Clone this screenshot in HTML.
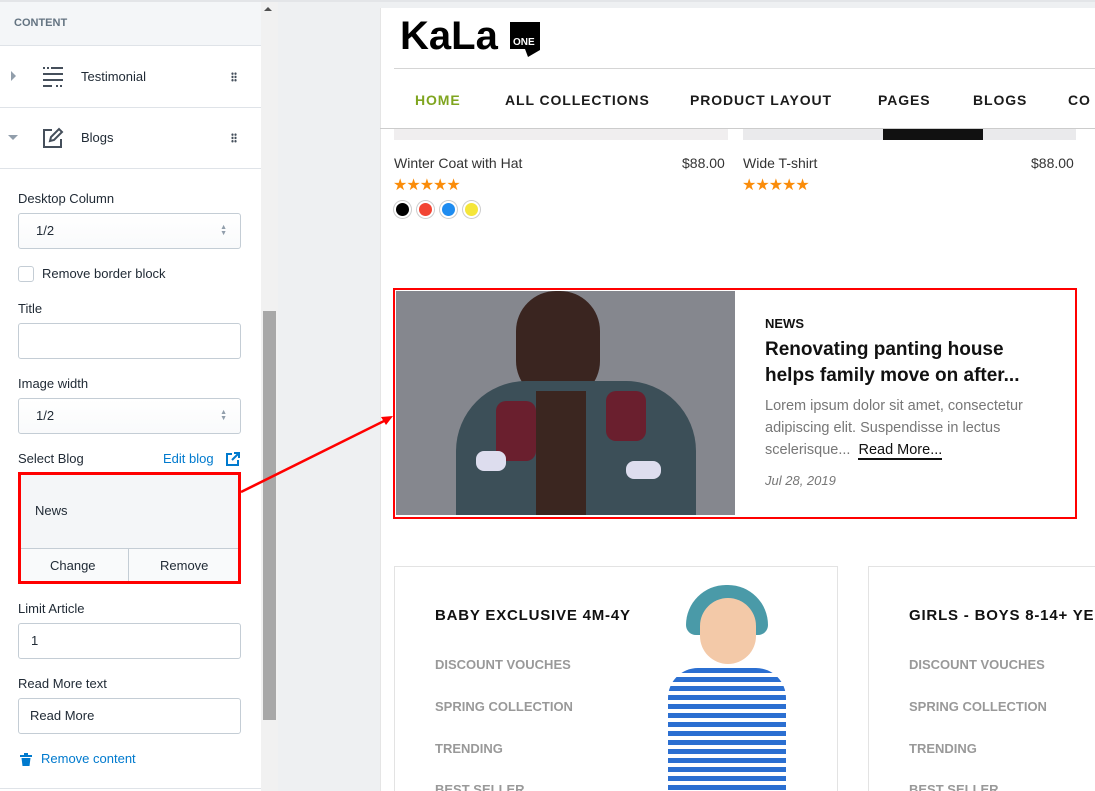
<!DOCTYPE html>
<html style="overflow:hidden;width:1095px;height:791px"><head><style>
*{box-sizing:border-box;margin:0;padding:0}
body{width:1095px;height:791px;overflow:hidden;background:#eef0f2;font-family:"Liberation Sans",sans-serif;position:relative}
.abs{position:absolute}
.side{left:0;top:0;width:261px;height:791px;background:#fff}
.lbl{position:absolute;left:18px;font-size:13px;color:#212b36}
.inp{position:absolute;left:18px;width:223px;height:36px;border:1px solid #c4cdd5;border-radius:3px;background:#fff;font-size:13px;color:#212b36;padding:0 0 0 12px;line-height:34px}
.sel{background:linear-gradient(#fff,#f9fafb);padding-left:17px}
.arr{position:absolute;right:13px;top:11px;font-size:7px;color:#919eab;line-height:6px}
.nav{font-size:14px;font-weight:bold;letter-spacing:0.9px;color:#1b1b1b;position:absolute;top:92px}
.lk{position:absolute;font-size:13px;font-weight:bold;color:#999}
.dots{position:absolute;left:231px;width:6px;height:10px;background:radial-gradient(circle,#454f5b 1.1px,transparent 1.3px) 0 0/3px 3.3px}
</style></head><body>
<div class="abs side">
 <div class="abs" style="left:0;top:0;width:261px;height:46px;background:#f4f6f8;border-bottom:1px solid #dfe3e8"></div>
 <div class="abs" style="left:14px;top:17px;font-size:11px;font-weight:bold;color:#637381">CONTENT</div>
 <div class="abs" style="left:11px;top:71px;width:0;height:0;border-left:5px solid #919eab;border-top:5px solid transparent;border-bottom:5px solid transparent"></div>
 <svg class="abs" style="left:42px;top:66px" width="22" height="22" viewBox="0 0 22 22" fill="#454f5b"><rect x="1" y="1" width="2" height="2"/><rect x="5" y="1" width="2" height="2"/><rect x="9" y="1" width="12" height="2"/><rect x="1" y="7" width="20" height="2"/><rect x="1" y="13" width="20" height="2"/><rect x="1" y="19" width="9" height="2"/><rect x="14" y="19" width="2" height="2"/><rect x="18" y="19" width="2" height="2"/></svg>
 <div class="abs" style="left:81px;top:69px;font-size:13px;color:#212b36">Testimonial</div>
 <div class="dots" style="top:72px"></div>
 <div class="abs" style="left:0;top:107px;width:261px;border-top:1px solid #dfe3e8"></div>
 <div class="abs" style="left:8px;top:135px;width:0;height:0;border-top:5px solid #919eab;border-left:5px solid transparent;border-right:5px solid transparent"></div>
 <svg class="abs" style="left:42px;top:127px" width="22" height="22" viewBox="0 0 22 22" fill="none" stroke="#454f5b" stroke-width="2"><path d="M10 3H2v17h17v-8"/><path d="M8 14l1-4 8-8 3 3-8 8z"/></svg>
 <div class="abs" style="left:81px;top:130px;font-size:13px;color:#212b36">Blogs</div>
 <div class="dots" style="top:133px"></div>
 <div class="abs" style="left:0;top:168px;width:261px;border-top:1px solid #dfe3e8"></div>

 <div class="lbl" style="top:191px">Desktop Column</div>
 <div class="inp sel" style="top:213px">1/2<div class="arr">▲<br>▼</div></div>
 <div class="abs" style="left:18px;top:266px;width:16px;height:16px;border:1px solid #c4cdd5;border-radius:3px"></div>
 <div class="lbl" style="top:266px;left:42px">Remove border block</div>
 <div class="lbl" style="top:301px">Title</div>
 <div class="inp" style="top:323px"></div>
 <div class="lbl" style="top:376px">Image width</div>
 <div class="inp sel" style="top:398px">1/2<div class="arr">▲<br>▼</div></div>
 <div class="lbl" style="top:451px">Select Blog</div>
 <div class="abs" style="left:163px;top:451px;font-size:13px;color:#007ace">Edit blog</div>
 <svg class="abs" style="left:226px;top:452px" width="14" height="14" viewBox="0 0 14 14" fill="none" stroke="#007ace" stroke-width="2"><path d="M6 2H1v11h11V8"/><path d="M6 8l7-7M8 1h5v5"/></svg>
 <div class="abs" style="left:18px;top:472px;width:223px;height:112px;border:3px solid #f00;background:#f4f6f8"></div>
 <div class="lbl" style="top:503px;left:35px">News</div>
 <div class="abs" style="left:21px;top:548px;width:217px;height:33px;border-top:1px solid #c4cdd5;background:#f9fafb"></div>
 <div class="abs" style="left:128px;top:548px;height:33px;border-left:1px solid #c4cdd5"></div>
 <div class="lbl" style="top:558px;left:50px">Change</div>
 <div class="lbl" style="top:558px;left:160px">Remove</div>
 <div class="lbl" style="top:601px">Limit Article</div>
 <div class="inp" style="top:623px">1</div>
 <div class="lbl" style="top:676px">Read More text</div>
 <div class="inp" style="top:698px;padding-left:11px">Read More</div>
 <svg class="abs" style="left:20px;top:753px" width="12" height="13" viewBox="0 0 12 13" fill="#007ace"><rect x="0" y="2" width="12" height="2"/><rect x="4" y="0" width="4" height="2"/><path d="M1.5 5h9l-1 8h-7z"/></svg>
 <div class="abs" style="left:41px;top:751px;font-size:13px;color:#007ace">Remove content</div>
 <div class="abs" style="left:0;top:788px;width:261px;border-top:1px solid #dfe3e8"></div>
</div>
<div class="abs" style="left:261px;top:0;width:17px;height:791px;background:#f1f1f1"></div>
<div class="abs" style="left:264px;top:7px;width:0;height:0;border-bottom:4px solid #505050;border-left:4px solid transparent;border-right:4px solid transparent"></div>
<div class="abs" style="left:263px;top:311px;width:13px;height:409px;background:#a8a8a8"></div>
<div class="abs" style="left:0;top:0;width:1095px;height:2px;background:#e3e5e8"></div>
<div class="abs" style="left:380px;top:8px;width:715px;height:783px;background:#fff;border-left:1px solid #e5e5e5;overflow:hidden">
</div>
<div class="abs" style="left:400px;top:14px;font-size:40px;font-weight:bold;color:#000;letter-spacing:0px;line-height:44px">KaLa</div>
<svg class="abs" style="left:507px;top:19px" width="38" height="38" viewBox="0 0 38 38"><path d="M3 3h30v28l-12 7-3-8H3z" fill="#000"/><text x="6" y="26" font-size="10" font-weight="bold" fill="#fff" font-family="Liberation Sans">ONE</text></svg>
<div class="abs" style="left:394px;top:68px;width:701px;border-top:1px solid #d5d5d5"></div>
<div class="nav" style="left:415px;color:#7fa51f">HOME</div>
<div class="nav" style="left:505px">ALL COLLECTIONS</div>
<div class="nav" style="left:690px">PRODUCT LAYOUT</div>
<div class="nav" style="left:878px">PAGES</div>
<div class="nav" style="left:973px">BLOGS</div>
<div class="nav" style="left:1068px">CO</div>
<div class="abs" style="left:380px;top:128px;width:715px;border-top:1px solid #ccc"></div>
<div class="abs" style="left:394px;top:129px;width:334px;height:11px;background:#f0eeef"></div>
<div class="abs" style="left:743px;top:129px;width:333px;height:11px;background:#eaeaec"></div>
<div class="abs" style="left:883px;top:129px;width:100px;height:11px;background:#111"></div>
<div class="abs" style="left:394px;top:155px;font-size:14px;color:#333">Winter Coat with Hat</div>
<div class="abs" style="left:682px;top:155px;font-size:14px;color:#333">$88.00</div>
<div class="abs" style="left:743px;top:155px;font-size:14px;color:#333">Wide T-shirt</div>
<div class="abs" style="left:1031px;top:155px;font-size:14px;color:#333">$88.00</div>
<div class="abs" style="left:393px;top:175px;font-size:16px;color:#fa8c0a;letter-spacing:-1px">★★★★★</div>
<div class="abs" style="left:742px;top:175px;font-size:16px;color:#fa8c0a;letter-spacing:-1px">★★★★★</div>
<div class="abs" style="left:394px;top:201px;width:17px;height:17px;border-radius:50%;background:#000;border:2px solid #fff;box-shadow:0 0 0 1px #ccc"></div>
<div class="abs" style="left:417px;top:201px;width:17px;height:17px;border-radius:50%;background:#f24433;border:2px solid #fff;box-shadow:0 0 0 1px #ccc"></div>
<div class="abs" style="left:440px;top:201px;width:17px;height:17px;border-radius:50%;background:#1e8cf0;border:2px solid #fff;box-shadow:0 0 0 1px #ccc"></div>
<div class="abs" style="left:463px;top:201px;width:17px;height:17px;border-radius:50%;background:#f5e63a;border:2px solid #fff;box-shadow:0 0 0 1px #ccc"></div>
<div class="abs" style="left:393px;top:288px;width:684px;height:231px;border:2px solid #f00"></div>
<div class="abs" style="left:396px;top:291px;width:339px;height:224px;background:#85878e;overflow:hidden">
 <div class="abs" style="left:120px;top:0;width:84px;height:110px;border-radius:40px;background:#3a2520"></div>
 <div class="abs" style="left:60px;top:90px;width:240px;height:160px;border-radius:70px 70px 0 0;background:#3c4f58"></div>
 <div class="abs" style="left:100px;top:110px;width:40px;height:60px;background:#6a1f2e;border-radius:10px"></div>
 <div class="abs" style="left:210px;top:100px;width:40px;height:50px;background:#6a1f2e;border-radius:10px"></div>
 <div class="abs" style="left:80px;top:160px;width:30px;height:20px;background:#dde;border-radius:8px"></div>
 <div class="abs" style="left:230px;top:170px;width:35px;height:18px;background:#dde;border-radius:8px"></div>
 <div class="abs" style="left:140px;top:100px;width:50px;height:124px;background:#3b2620"></div>
</div>
<div class="abs" style="left:765px;top:316px;font-size:13px;font-weight:bold;color:#111">NEWS</div>
<div class="abs" style="left:765px;top:337px;font-size:19px;font-weight:bold;color:#111;line-height:26px;width:270px">Renovating panting house helps family move on after...</div>
<div class="abs" style="left:765px;top:395px;font-size:14.5px;color:#777;line-height:22px;width:285px">Lorem ipsum dolor sit amet, consectetur adipiscing elit. Suspendisse in lectus scelerisque... <span style="color:#111;border-bottom:2px solid #111;margin-left:4px">Read More...</span></div>
<div class="abs" style="left:765px;top:473px;font-size:13px;font-style:italic;color:#777">Jul 28, 2019</div>
<svg class="abs" style="left:236px;top:412px" width="160" height="85"><line x1="5" y1="80" x2="150" y2="8" stroke="#f00" stroke-width="2.5"/><path d="M157 4l-12 1 5 8z" fill="#f00"/></svg>
<div class="abs" style="left:394px;top:566px;width:444px;height:240px;border:1px solid #e3e3e3"></div>
<div class="abs" style="left:868px;top:566px;width:240px;height:240px;border:1px solid #e3e3e3"></div>
<div class="abs" style="left:435px;top:607px;font-size:15px;font-weight:bold;letter-spacing:0.8px;color:#111">BABY EXCLUSIVE 4M-4Y</div>
<div class="abs" style="left:909px;top:607px;font-size:15px;font-weight:bold;letter-spacing:0.8px;color:#111;white-space:nowrap">GIRLS - BOYS 8-14+ YE</div>
<div class="lk" style="left:435px;top:657px">DISCOUNT VOUCHES</div>
<div class="lk" style="left:435px;top:699px">SPRING COLLECTION</div>
<div class="lk" style="left:435px;top:741px">TRENDING</div>
<div class="lk" style="left:435px;top:782px">BEST SELLER</div>
<div class="lk" style="left:909px;top:657px">DISCOUNT VOUCHES</div>
<div class="lk" style="left:909px;top:699px">SPRING COLLECTION</div>
<div class="lk" style="left:909px;top:741px">TRENDING</div>
<div class="lk" style="left:909px;top:782px">BEST SELLER</div>
<div class="abs" style="left:686px;top:585px;width:82px;height:50px;border-radius:40px 40px 10px 10px;background:#4a9aa8"></div>
<div class="abs" style="left:700px;top:598px;width:56px;height:66px;border-radius:28px;background:#f3c9a8"></div>
<div class="abs" style="left:668px;top:668px;width:118px;height:123px;border-radius:30px 30px 0 0;background:repeating-linear-gradient(#2b6fd1 0 5px,#fff 5px 9px)"></div>
</body></html>
